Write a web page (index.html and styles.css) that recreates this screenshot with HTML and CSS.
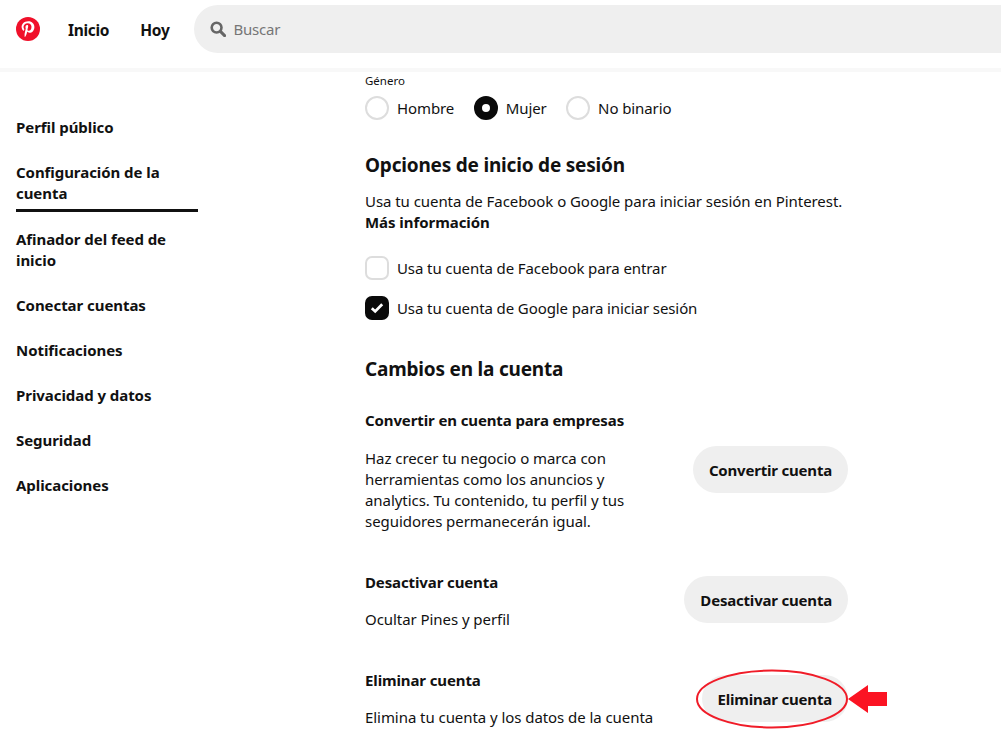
FILE: index.html
```html
<!DOCTYPE html>
<html lang="es">
<head>
<meta charset="utf-8">
<title>Pinterest</title>
<link rel="stylesheet" href="styles.css">
</head>
<body>
<header class="topbar">
  <svg class="logo" viewBox="0 0 24 24" width="24" height="24"><circle cx="12" cy="12" r="12" fill="#f0102a"/><path fill="#fff" d="M12.2 4.2c-4.2 0-6.6 2.8-6.6 5.8 0 1.4.8 3.2 2 3.8.2.1.4 0 .4-.2l.3-1.1c0-.2 0-.3-.1-.4-.4-.5-.7-1.2-.7-2 0-2 1.5-3.9 4.3-3.9 2.2 0 3.7 1.5 3.7 3.6 0 2.4-1.2 4-2.7 4-.9 0-1.5-.7-1.3-1.6.2-1 .7-2.1.7-2.9 0-.7-.4-1.2-1.1-1.2-.9 0-1.6.9-1.6 2.2 0 .8.3 1.3.3 1.3l-1.1 4.6c-.2.9-.1 2.6 0 3.6 0 .2.2.2.3.1.4-.5 1.3-2 1.6-3l.6-2.3c.4.6 1.3 1.2 2.2 1.2 2.9 0 5-2.7 5-5.9 0-3.1-2.6-5.7-5.8-5.7z"/></svg>
  <nav class="topnav"><a class="navlink">Inicio</a><a class="navlink">Hoy</a></nav>
  <div class="search">
    <svg class="search-icon" viewBox="0 0 16 16" width="16" height="16"><circle cx="6.6" cy="6.6" r="4.9" fill="none" stroke="#666" stroke-width="2.6"/><path d="M10.4 10.4 14.6 14.6" stroke="#666" stroke-width="3" stroke-linecap="round"/></svg>
    <span class="search-text">Buscar</span>
  </div>
</header>
<div class="layout">
  <aside class="sidebar">
    <a class="side-item">Perfil público</a>
    <a class="side-item active">Configuración de la cuenta</a>
    <a class="side-item">Afinador del feed de inicio</a>
    <a class="side-item">Conectar cuentas</a>
    <a class="side-item">Notificaciones</a>
    <a class="side-item">Privacidad y datos</a>
    <a class="side-item">Seguridad</a>
    <a class="side-item">Aplicaciones</a>
  </aside>
  <main class="content">
    <div class="field-label">Género</div>
    <div class="radios">
      <label class="choice"><span class="radio"></span>Hombre</label>
      <label class="choice"><span class="radio on"></span>Mujer</label>
      <label class="choice"><span class="radio"></span>No binario</label>
    </div>
    <h2 class="heading login-heading">Opciones de inicio de sesión</h2>
    <p class="text">Usa tu cuenta de Facebook o Google para iniciar sesión en Pinterest.<br><b class="more">Más información</b></p>
    <div class="checks">
      <label class="choice"><span class="box"></span>Usa tu cuenta de Facebook para entrar</label>
      <label class="choice"><span class="box on"><svg viewBox="0 0 14 12" width="14" height="12"><path d="M1.8 6.2 5.2 9.4 12.2 2.2" fill="none" stroke="#fff" stroke-width="2.8"/></svg></span>Usa tu cuenta de Google para iniciar sesión</label>
    </div>
    <h2 class="heading changes-heading">Cambios en la cuenta</h2>
    <section class="row convert">
      <div class="row-body">
        <h3 class="row-title gap-wide">Convertir en cuenta para empresas</h3>
        <p class="text narrow">Haz crecer tu negocio o marca con herramientas como los anuncios y analytics. Tu contenido, tu perfil y tus seguidores permanecerán igual.</p>
      </div>
      <button class="btn">Convertir cuenta</button>
    </section>
    <section class="row deactivate">
      <div class="row-body">
        <h3 class="row-title">Desactivar cuenta</h3>
        <p class="text">Ocultar Pines y perfil</p>
      </div>
      <button class="btn">Desactivar cuenta</button>
    </section>
    <section class="row remove">
      <div class="row-body">
        <h3 class="row-title">Eliminar cuenta</h3>
        <p class="text">Elimina tu cuenta y los datos de la cuenta</p>
      </div>
      <button class="btn">Eliminar cuenta</button>
      <svg class="callout" viewBox="0 0 192 60" width="192" height="60"><ellipse cx="76" cy="30" rx="75" ry="28.5" fill="none" stroke="#f01c28" stroke-width="2"/><path fill="#fb1423" d="M152 30 172 16V23H191V37H172V44Z"/></svg>
    </section>
  </main>
</div>
</body>
</html>
```
FILE: styles.css
```css
* { box-sizing: border-box; }
html, body { margin: 0; height: 736px; overflow: hidden; }
body { background: #fff; color: #111; font-family: "Noto Sans", sans-serif; font-size: 15px; }

.topbar { height: 72px; padding: 5px 0 0 16px; display: flex; align-items: flex-start; border-bottom: 4px solid #f8f8f8; }
.logo { margin-top: 12px; flex: none; }
.topnav { display: flex; gap: 31px; margin: 0 25px 0 28px; }
.navlink { font-weight: 700; font-size: 15.5px; line-height: 50px; letter-spacing: -0.3px; }
.search { flex: 1; height: 48px; background: #efefef; border-radius: 24px 0 0 24px; display: flex; align-items: center; padding-left: 16px; gap: 7px; }
.search-text { color: #767676; font-size: 15px; letter-spacing: -0.2px; }

.layout { display: flex; }
.sidebar { width: 365px; flex: none; padding: 33px 0 0 16px; display: flex; flex-direction: column; }
.side-item { width: 182px; font-weight: 700; font-size: 15px; line-height: 21px; padding: 12px 0; letter-spacing: -0.06px; }
.side-item.active { border-bottom: 3px solid #111; padding-bottom: 5px; margin-bottom: 5px; }

.content { width: 483px; padding-top: 1px; }
.field-label { font-size: 11.5px; line-height: 16px; }
.radios { display: flex; gap: 19.5px; margin-top: 7px; }
.choice { display: flex; align-items: center; gap: 8px; line-height: 24px; font-size: 15px; letter-spacing: -0.1px; }
.radio { width: 24px; height: 24px; border-radius: 50%; border: 2px solid #ddd; }
.radio.on { border: 8px solid #0a0a0a; }
.heading { font-size: 19px; line-height: 26px; font-weight: 700; margin: 0; letter-spacing: -0.2px; }
.login-heading { margin-top: 32px; }
.text { margin: 0; line-height: 21px; font-size: 15px; letter-spacing: -0.06px; }
.login-heading + .text { margin-top: 13px; }
.more { font-weight: 700; }
.checks { display: flex; flex-direction: column; gap: 16px; margin-top: 23px; }
.box { width: 24px; height: 24px; border-radius: 7px; border: 2px solid #ddd; display: flex; align-items: center; justify-content: center; }
.box.on { background: #0a0a0a; border-color: #0a0a0a; }
.changes-heading { margin-top: 36px; }
.row { display: flex; justify-content: space-between; align-items: center; position: relative; }
.row-title { margin: 0 0 16px; font-size: 15px; line-height: 21px; font-weight: 700; letter-spacing: -0.12px; }
.gap-wide { margin-bottom: 17px; }
.narrow { width: 265px; }
.convert { margin-top: 28px; }
.deactivate { margin-top: 40px; }
.remove { margin-top: 40px; }
.btn { height: 47px; margin-bottom: 4px; padding: 2px 16px 0; border: 0; border-radius: 24px; background: #efefef; color: #111; font: 700 15px "Noto Sans", sans-serif; letter-spacing: -0.2px; white-space: nowrap; }
.remove .btn { margin-bottom: 2px; }
.callout { position: absolute; right: -40px; top: 50%; margin-top: -30px; }
```
